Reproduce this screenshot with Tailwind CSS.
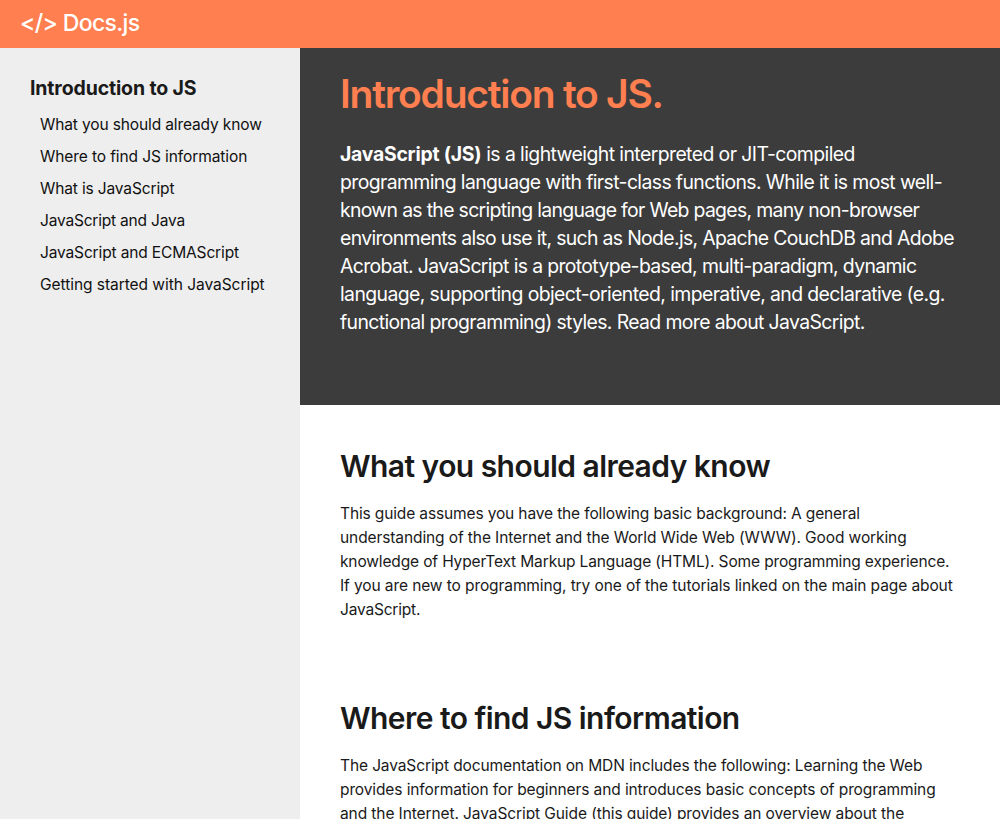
<!DOCTYPE html>
<html lang="en">
<head>
<meta charset="utf-8">
<title>Docs.js</title>
<script src="https://cdn.jsdelivr.net/npm/@tailwindcss/browser@4"></script>
</head>
<body class="h-screen overflow-hidden bg-white font-['Inter',sans-serif] text-[#1a1a1a]">
<header class="h-12 bg-[#ff7f50] px-5 text-white flex items-center">
  <div class="text-[23px] leading-[46px] pb-0.5 whitespace-nowrap font-medium tracking-[-0.65px]">&lt;/&gt; Docs.js</div>
</header>
<div class="flex h-[771px]">
  <nav class="w-[300px] shrink-0 bg-[#eeeeee] pt-6 pl-[30px]">
    <h2 class="h-8 text-[19.5px] leading-8 font-bold whitespace-nowrap tracking-[-0.14px]">Introduction to JS</h2>
    <ul class="pl-2.5 pt-[5px] text-[15.52px] leading-8 whitespace-nowrap text-[#111]">
      <li class="tracking-[-0.13px]">What you should already know</li>
      <li class="tracking-[-0.1px]">Where to find JS information</li>
      <li class="tracking-[-0.14px]">What is JavaScript</li>
      <li class="tracking-[-0.2px]">JavaScript and Java</li>
      <li class="tracking-[-0.15px]">JavaScript and ECMAScript</li>
      <li class="tracking-[-0.05px]">Getting started with JavaScript</li>
    </ul>
  </nav>
  <main class="min-w-0 flex-1 overflow-hidden whitespace-nowrap">
    <section class="h-[357px] bg-[#3c3c3c] pl-10 pt-[22px] text-white">
      <h1 class="text-[39px] leading-[48px] font-semibold text-[#ff7f50] tracking-[-1.25px]">Introduction to JS.</h1>
      <div class="pt-[22px] text-[19.4px] leading-7">
        <p class="tracking-[-0.57px]"><b class="font-bold tracking-[-0.24px]">JavaScript (JS)</b> is a lightweight interpreted or JIT-compiled</p>
        <p class="tracking-[-0.6px]">programming language with first-class functions. While it is most well-</p>
        <p class="tracking-[-0.67px]">known as the scripting language for Web pages, many non-browser</p>
        <p class="tracking-[-0.655px]">environments also use it, such as Node.js, Apache CouchDB and Adobe</p>
        <p class="tracking-[-0.63px]">Acrobat. JavaScript is a prototype-based, multi-paradigm, dynamic</p>
        <p class="tracking-[-0.59px]">language, supporting object-oriented, imperative, and declarative (e.g.</p>
        <p class="tracking-[-0.625px]">functional programming) styles. Read more about JavaScript.</p>
      </div>
    </section>
    <section class="h-[252px] pl-10 pt-[41px]">
      <h2 class="text-[30px] leading-10 font-semibold tracking-[-0.55px]">What you should already know</h2>
      <div class="pt-4 text-[15.52px] leading-6">
        <p class="tracking-[-0.14px]">This guide assumes you have the following basic background: A general</p>
        <p class="tracking-[-0.106px]">understanding of the Internet and the World Wide Web (WWW). Good working</p>
        <p class="tracking-[-0.145px]">knowledge of HyperText Markup Language (HTML). Some programming experience.</p>
        <p class="tracking-[-0.1px]">If you are new to programming, try one of the tutorials linked on the main page about</p>
        <p class="tracking-[-0.2px]">JavaScript.</p>
      </div>
    </section>
    <section class="pl-10 pt-[41px]">
      <h2 class="text-[30px] leading-10 font-semibold tracking-[-0.55px]">Where to find JS information</h2>
      <div class="pt-4 text-[15.52px] leading-6">
        <p class="tracking-[-0.117px]">The JavaScript documentation on MDN includes the following: Learning the Web</p>
        <p class="tracking-[-0.115px]">provides information for beginners and introduces basic concepts of programming</p>
        <p class="tracking-[-0.1px]">and the Internet. JavaScript Guide (this guide) provides an overview about the</p>
      </div>
    </section>
  </main>
</div>
</body>
</html>
